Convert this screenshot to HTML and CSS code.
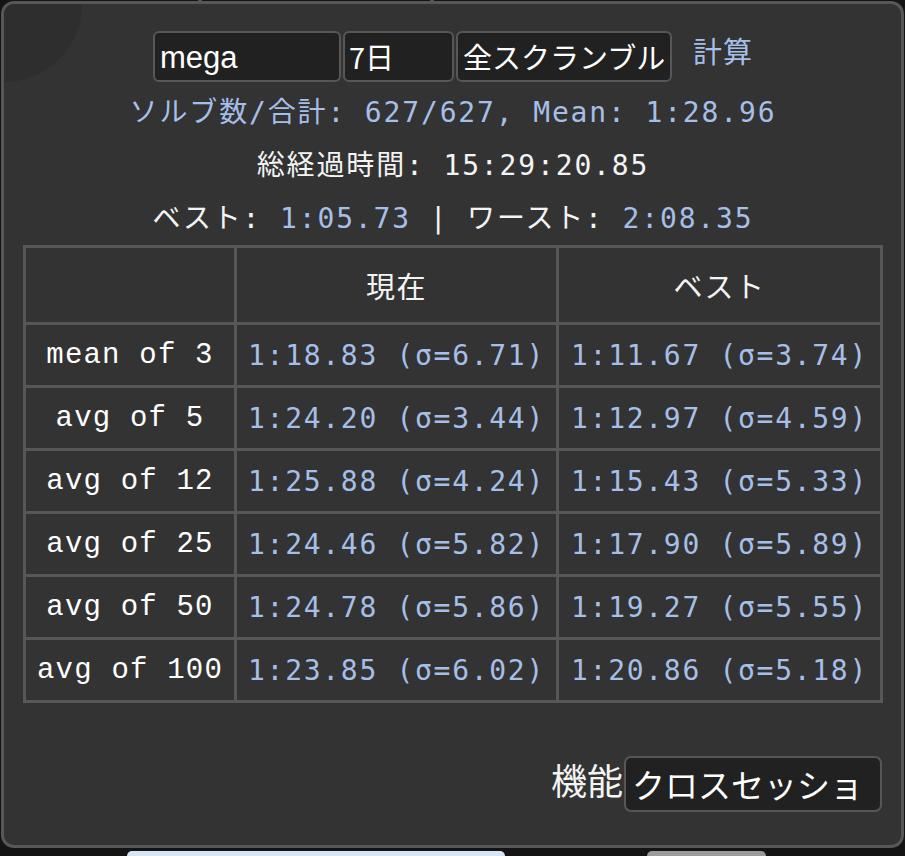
FILE: index.html
```html
<!DOCTYPE html>
<html lang="ja">
<head>
<meta charset="utf-8">
<title>統計</title>
<link rel="stylesheet" href="styles.css">
</head>
<body>
<div class="topdots"><span class="dot dot-a"></span><span class="dot dot-b"></span></div>
<div class="panel">
  <div class="corner-glow"></div>
  <div class="controls">
    <input class="field field-puzzle" type="text" value="mega">
    <select class="field field-period"><option>7日</option></select>
    <select class="field field-scramble"><option>全スクランブル</option></select>
    <span class="calc">計算</span>
  </div>
  <div class="line line-blue">ソルブ数/合計: 627/627, Mean: 1:28.96</div>
  <div class="line">総経過時間: 15:29:20.85</div>
  <div class="line">ベスト: <span class="val">1:05.73</span> | ワースト: <span class="val">2:08.35</span></div>
  <table class="stats">
    <colgroup><col class="c1"><col class="c2"><col class="c3"></colgroup>
    <thead>
      <tr class="head"><th></th><th>現在</th><th>ベスト</th></tr>
    </thead>
    <tbody>
      <tr><td class="lbl">mean of 3</td><td class="num">1:18.83 (σ=6.71)</td><td class="num">1:11.67 (σ=3.74)</td></tr>
      <tr><td class="lbl">avg of 5</td><td class="num">1:24.20 (σ=3.44)</td><td class="num">1:12.97 (σ=4.59)</td></tr>
      <tr><td class="lbl">avg of 12</td><td class="num">1:25.88 (σ=4.24)</td><td class="num">1:15.43 (σ=5.33)</td></tr>
      <tr><td class="lbl">avg of 25</td><td class="num">1:24.46 (σ=5.82)</td><td class="num">1:17.90 (σ=5.89)</td></tr>
      <tr><td class="lbl">avg of 50</td><td class="num">1:24.78 (σ=5.86)</td><td class="num">1:19.27 (σ=5.55)</td></tr>
      <tr><td class="lbl">avg of 100</td><td class="num">1:23.85 (σ=6.02)</td><td class="num">1:20.86 (σ=5.18)</td></tr>
    </tbody>
  </table>
  <div class="footer">
    <span class="func-label">機能</span>
    <select class="field field-func"><option>クロスセッション</option></select>
  </div>
</div>
<div class="bottom-strip">
  <span class="pill pill-blue"></span>
  <span class="pill pill-gray"></span>
</div>
</body>
</html>
```
FILE: styles.css
```css
html, body {
  margin: 0;
  padding: 0;
  background: #141414;
  width: 905px;
  height: 856px;
  overflow: hidden;
}
body {
  position: relative;
  font-family: "Noto Sans CJK JP", "Noto Sans", sans-serif;
  color: #f2f2f2;
}
.topdots {
  position: absolute;
  top: 0;
  left: 0;
  width: 905px;
  height: 2px;
}
.dot {
  position: absolute;
  top: 0;
  width: 4px;
  height: 2px;
  background: #3f6a3f;
  border-radius: 2px;
}
.dot-a { left: 198px; }
.dot-b { left: 430px; }
.panel {
  position: relative;
  box-sizing: border-box;
  margin: 1px 1px 0 1px;
  width: 903px;
  height: 847px;
  border: 3px solid #575757;
  border-radius: 13px;
  background: #333333;
  padding: 27px 19px 0 20px;
  overflow: hidden;
}
.corner-glow {
  position: absolute;
  left: -78px;
  top: -78px;
  width: 156px;
  height: 156px;
  border-radius: 50%;
  background: #2e2e2e;
}
.controls {
  position: relative;
  display: flex;
  justify-content: center;
  align-items: center;
  height: 51px;
}
.field {
  -webkit-appearance: none;
  appearance: none;
  box-sizing: border-box;
  height: 51px;
  margin: 0;
  border: 2px solid #575757;
  border-radius: 6px;
  background: #212121;
  color: #ffffff;
  font-family: "Liberation Sans", "Noto Sans CJK JP", sans-serif;
  font-size: 31px;
  padding: 2px 0 0 5px;
  outline: none;
}
.field-puzzle { width: 188px; }
.field-period { width: 111px; margin-left: 2px; font-family: "Noto Sans CJK JP", sans-serif; font-size: 29px; padding: 0 0 2px 4px; }
.field-scramble { width: 216px; margin-left: 2px; font-family: "Noto Sans CJK JP", sans-serif; font-size: 29px; padding: 0 0 2px 5px; }
.calc {
  margin-left: 21px;
  width: 60px;
  color: #a5bfe8;
  font-size: 29px;
  letter-spacing: 1px;
  line-height: 40px;
  margin-top: -14px;
}
.line {
  position: relative;
  height: 53px;
  line-height: 53px;
  text-align: center;
  font-family: "DejaVu Sans Mono", "Noto Sans CJK JP", monospace;
  font-size: 28px;
  letter-spacing: 1.85px;
  color: #f4f4f4;
  white-space: pre;
}
.controls + .line { margin-top: 4px; }
.line-blue, .val { color: #a5bfe8; }
.stats {
  position: relative;
  table-layout: fixed;
  border-collapse: collapse;
  width: 857px;
  margin-left: -1px;
  border: 3px solid #575757;
}
.c1 { width: 211px; }
.c2 { width: 322px; }
.c3 { width: 324px; }
.stats th, .stats td {
  border: 3px solid #575757;
  padding: 0;
  text-align: center;
  white-space: nowrap;
  overflow: hidden;
}
.stats th {
  height: 74px;
  font-weight: normal;
  font-family: "Noto Sans CJK JP", sans-serif;
  font-size: 29px;
  letter-spacing: 1.5px;
  color: #f4f4f4;
}
.stats td { height: 60px; }
.lbl {
  font-family: "Liberation Mono", monospace;
  font-size: 29px;
  letter-spacing: 1.2px;
  color: #ffffff;
}
.num {
  font-family: "DejaVu Sans Mono", monospace;
  font-size: 28px;
  letter-spacing: 1.7px;
  color: #a5bfe8;
}
.footer {
  position: relative;
  display: flex;
  justify-content: flex-end;
  align-items: center;
  margin-top: 53px;
}
.func-label {
  font-size: 36px;
  line-height: 46px;
  color: #f4f4f4;
  margin: 0 1px 10px 0;
}
.field-func {
  width: 258px;
  height: 56px;
  font-family: "Noto Sans CJK JP", sans-serif;
  font-size: 33px;
  padding: 0 14px 0 6px;
  border-radius: 7px;
  overflow: hidden;
  white-space: nowrap;
}
.bottom-strip {
  position: relative;
  height: 8px;
  display: flex;
  align-items: flex-end;
}
.pill {
  display: block;
  height: 5px;
  border-radius: 5px 5px 0 0;
}
.pill-blue {
  margin-left: 127px;
  width: 378px;
  background: #d3e7f7;
}
.pill-gray {
  margin-left: 142px;
  width: 119px;
  background: #9a9a9a;
}
```
